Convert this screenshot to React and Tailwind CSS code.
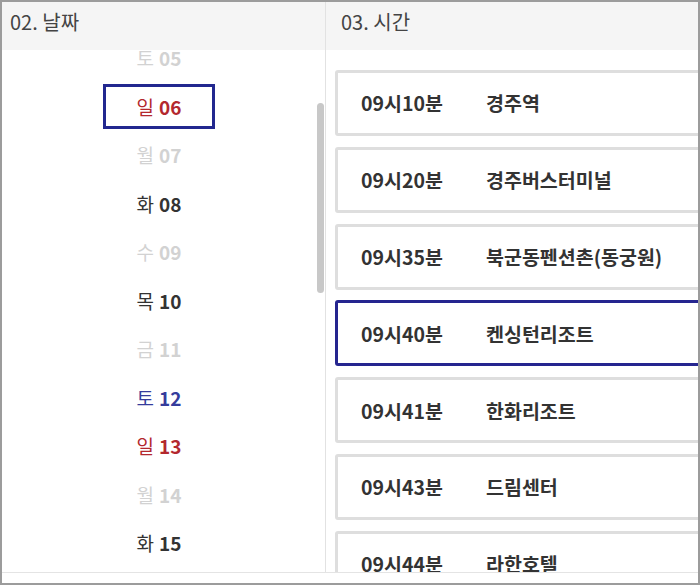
const dates = [
  { w: "토", d: "05", tone: "off" },
  { w: "일", d: "06", tone: "sun", selected: true },
  { w: "월", d: "07", tone: "off" },
  { w: "화", d: "08", tone: "on" },
  { w: "수", d: "09", tone: "off" },
  { w: "목", d: "10", tone: "on" },
  { w: "금", d: "11", tone: "off" },
  { w: "토", d: "12", tone: "sat" },
  { w: "일", d: "13", tone: "sun" },
  { w: "월", d: "14", tone: "off" },
  { w: "화", d: "15", tone: "on" },
];

const toneClass = {
  on: "text-[#333333]",
  off: "text-[#d2d2d2]",
  sat: "text-[#353c9c]",
  sun: "text-[#b3282e]",
};

const times = [
  { t: "09시10분", p: "경주역" },
  { t: "09시20분", p: "경주버스터미널" },
  { t: "09시35분", p: "북군동펜션촌(동궁원)" },
  { t: "09시40분", p: "켄싱턴리조트", selected: true },
  { t: "09시41분", p: "한화리조트" },
  { t: "09시43분", p: "드림센터" },
  { t: "09시44분", p: "라한호텔" },
];

export default function App() {
  return (
    <div
      className="w-[700px] h-[585px] border-2 border-[#9c9c9c] bg-white flex flex-col overflow-hidden"
      style={{ fontFamily: '"Noto Sans CJK KR", "Noto Sans", sans-serif' }}
    >
      <div className="h-[571px] flex border-b border-[#e4e4e4] overflow-hidden">
        {/* 날짜 */}
        <div className="w-[324px] flex flex-col border-r border-[#e2e2e2]">
          <div className="h-[48px] shrink-0 bg-[#f5f5f5] pl-2 pt-[6px] text-[20px] leading-[28px] text-[#444]">
            02. 날짜
          </div>
          <div className="flex-1 flex overflow-hidden">
            <div className="flex-1 -mt-[16px]">
              {dates.map((x) => (
                <div key={x.d} className="h-[48.5px] flex items-center justify-center">
                  <div
                    className={`w-[112px] h-[45px] flex items-center justify-center gap-[5px] text-[19px] border-[3px] ${
                      x.selected ? "border-[#22288f]" : "border-transparent"
                    } ${toneClass[x.tone]}`}
                  >
                    <span>{x.w}</span>
                    <span className="font-bold">{x.d}</span>
                  </div>
                </div>
              ))}
            </div>
            <div className="w-[9px] shrink-0">
              <div className="ml-px mt-[53px] w-[7px] h-[190px] rounded-full bg-[#c8c8c8]" />
            </div>
          </div>
        </div>

        {/* 시간 */}
        <div className="flex-1 flex flex-col overflow-hidden">
          <div className="h-[48px] shrink-0 bg-[#f5f5f5] pl-[15px] pt-[6px] text-[20px] leading-[28px] text-[#444]">
            03. 시간
          </div>
          <div className="flex-1 overflow-hidden pl-[9px] pt-[20px]">
            {times.map((x) => (
              <div
                key={x.t}
                className={`w-[420px] h-[66px] mb-[10.8px] flex items-center pl-[23px] rounded-[3px] border-[3px] text-[19.5px] font-bold text-[#333] ${
                  x.selected ? "border-[#25258f]" : "border-[#dedede]"
                }`}
              >
                <span className="w-[125px] shrink-0">{x.t}</span>
                <span>{x.p}</span>
              </div>
            ))}
          </div>
        </div>
      </div>
    </div>
  );
}
